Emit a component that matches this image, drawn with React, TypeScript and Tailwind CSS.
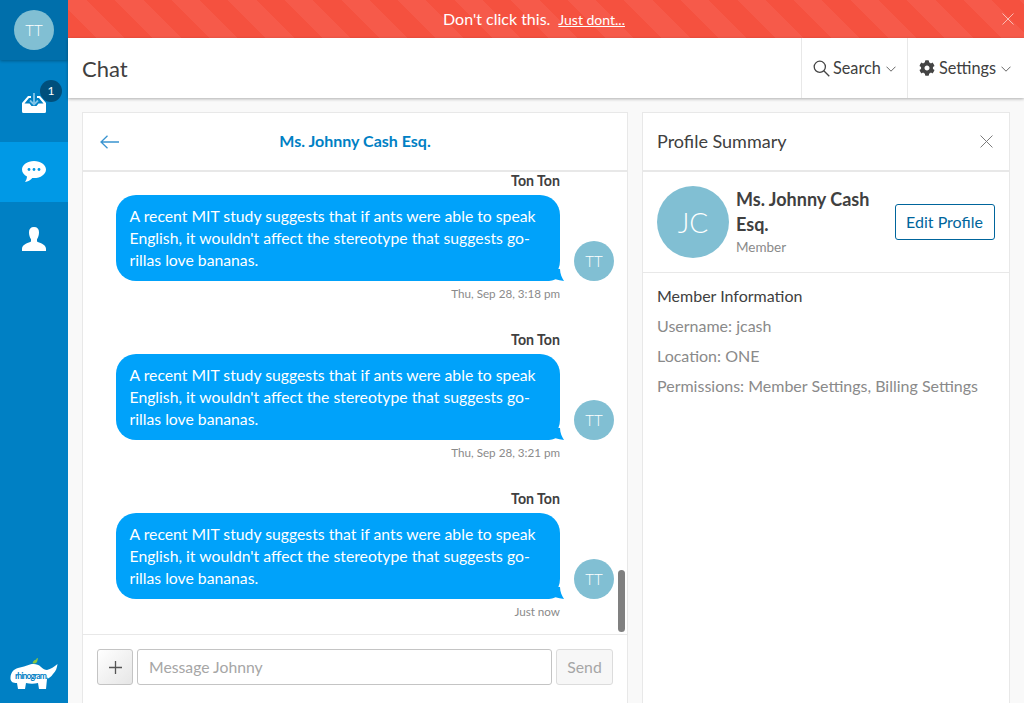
import { FaCog } from "react-icons/fa";

const lato = "font-['Lato',sans-serif]";

function Chevron() {
  return (
    <svg width="10" height="6" viewBox="0 0 10 6" fill="none" stroke="#555" strokeWidth="0.9" className="mt-0.5 ml-[5px]">
      <path d="M0.5 0.7L5 5.2L9.5 0.7" />
    </svg>
  );
}

function CloseIcon({ color, size }: any) {
  return (
    <svg width={size} height={size} viewBox="0 0 12 12" fill="none" stroke={color} strokeWidth="0.9">
      <path d="M0.5 0.5L11.5 11.5M11.5 0.5L0.5 11.5" />
    </svg>
  );
}

function InboxIcon() {
  return (
    <svg width="24" height="20" viewBox="0 0 24 20" className="block">
      <path d="M0 10L6 3H9V5H7L2.500 10.500H7.500L9.500 13H14.500L16.500 10.500H21.500L17 5H15V3H18L24 10V18.500A1.500 1.500 0 0 1 22.500 20H1.500A1.500 1.500 0 0 1 0 18.500z" fill="#fff" />
      <path d="M12 0V11M8 7.500L12 11.500L16 7.500" fill="none" stroke="#7fc4e8" strokeWidth="1.800" />
    </svg>
  );
}

function ChatIcon() {
  return (
    <svg width="24" height="22" viewBox="0 0 24 22" className="block">
      <path d="M12 0C5.400 0 0 3.700 0 8.500c0 3 2 5.500 5 7-.1 2-.9 4-2 5.500 2.800-.3 5.500-2 7.300-4 .6.100 1.100.100 1.700.100 6.600 0 12-3.800 12-8.600S18.600 0 12 0z" fill="#fff" />
      <circle cx="7" cy="8.500" r="1.400" fill="#0099e6" />
      <circle cx="12" cy="8.500" r="1.400" fill="#0099e6" />
      <circle cx="17" cy="8.500" r="1.400" fill="#0099e6" />
    </svg>
  );
}

function PersonIcon() {
  return (
    <svg width="24" height="24" viewBox="0 0 24 24" className="block">
      <path d="M12 0c3.300 0 5 2 5 5.200 0 2.600-.7 5.300-2 7v2.300c1.600 1.200 9 2.600 9 7.300V24H0v-2.200c0-4.700 7.400-6.100 9-7.300v-2.300C7.700 10.500 7 7.800 7 5.200 7 2 8.700 0 12 0z" fill="#fff" />
    </svg>
  );
}

function RhinoLogo() {
  return (
    <svg width="48" height="32" viewBox="0 0 48 32" className="block">
      <path d="M22.500 6.500C23 3.500 25 2.500 26 2.700L27 1L28 1.500L27 5C26 6.500 24 6.800 22.500 6.500z" fill="#8cc63f" />
      <path d="M8 32L7 26C3 26 0 25 0.500 20C1 15 4 12 8 11C12 10 16 9 20 7.500C24 6.500 28 7 31 10C33 12 35 13 37 13C41 12 44 10 47.500 7C47 11 46 14 43 17C41 20 39 21 37 22L36 32H29L28 26C24 27 20 27 16 26L15 32z" fill="#fff" />
      <text x="5" y="22" fontSize="8.500" fontWeight="700" fontFamily="Lato, sans-serif" fill="#0080c4" textLength="33">rhinogram.</text>
    </svg>
  );
}

function Message({ time }: any) {
  return (
    <div className="flex flex-col items-end pr-[67px]">
      <div className="text-[14.2px] leading-[22px] font-bold text-[#404040] mb-[3px]">Ton Ton</div>
      <div className="relative flex w-full justify-end">
        <div className="relative w-[444px] bg-[#00a2fa] text-white rounded-[20px] pl-[13.5px] pr-[14px] py-[10px] text-[15.75px] leading-[22px]">
          A recent MIT study suggests that if ants were able to speak English, it wouldn't affect the stereotype that suggests go-rillas love bananas.
          <svg width="24" height="12" viewBox="0 0 24 12" className="absolute right-[-4px] bottom-0">
            <path d="M0 0H20C20 5 22 9 24 12C21 11.500 18 11 15.500 10.300C13 11.500 11 12 9 12H0z" fill="#00a2fa" />
          </svg>
        </div>
        <div className="absolute right-[-54px] bottom-0 w-10 h-10 rounded-full bg-[#81bfd3] text-white font-light text-[15px] flex items-center justify-center">TT</div>
      </div>
      <div className="text-[11.65px] leading-[16px] mt-[5px] text-[#8a8a8a]">{time}</div>
    </div>
  );
}

export default function App() {
  return (
    <div className={`${lato} flex h-screen overflow-hidden bg-[#f9f9f9] text-[#404040]`}>
      <div className="w-[68px] shrink-0 bg-[#0080c4] flex flex-col">
        <div className="h-[60px] bg-[#006fab] shadow-[0_1px_3px_rgba(0,0,0,0.3)] flex items-center justify-center">
          <div className="w-10 h-10 rounded-full bg-[#81bfd3] text-white font-light text-[15px] flex items-center justify-center">TT</div>
        </div>
        <div className="relative h-[82px] flex items-center justify-center pt-[3px]">
          <InboxIcon />
          <div className="absolute left-[40px] top-[20px] w-[22px] h-[22px] rounded-full bg-[#004f7c] text-white text-[12px] flex items-center justify-center">1</div>
        </div>
        <div className="h-[60px] bg-[#0099e6] flex items-center justify-center">
          <ChatIcon />
        </div>
        <div className="h-[74px] flex items-center justify-center">
          <PersonIcon />
        </div>
        <div className="mt-auto flex justify-start pl-[10px] pb-[14px]">
          <RhinoLogo />
        </div>
      </div>

      <div className="flex-1 min-w-0 flex flex-col">
        <div className="relative h-[38px] shrink-0 flex items-center justify-center gap-2 pr-[24px] text-white text-[16px] bg-[repeating-linear-gradient(45deg,#f5513f_0,#f5513f_20px,#f65a4a_20px,#f65a4a_40px)]">
          <span>Don't click this.</span>
          <span className="underline text-[14px]">Just dont...</span>
          <span className="absolute right-[10px] top-[13px]">
            <CloseIcon color="#fbc7c0" size={12} />
          </span>
        </div>

        <div className="relative z-10 h-[60px] shrink-0 bg-white shadow-[0_1px_3px_rgba(0,0,0,0.3)] flex items-center">
          <div className="flex-1 pl-[14px] text-[22px]">Chat</div>
          <div className="h-full flex items-center pl-[11px] pr-[11px] border-l border-[#e8e8e8] text-[16.3px]">
            <svg width="17" height="17" viewBox="0 0 17 17" fill="none" stroke="#444" strokeWidth="1.300" className="mr-[3px]">
              <circle cx="6.800" cy="6.800" r="5.600" />
              <path d="M10.800 10.800L16.300 16.300" />
            </svg>
            <span>Search</span>
            <Chevron />
          </div>
          <div className="h-full flex items-center pl-[11px] pr-[13px] border-l border-[#e8e8e8] text-[16.3px]">
            <FaCog size={16} color="#444" className="mr-[4px]" />
            <span>Settings</span>
            <Chevron />
          </div>
        </div>

        <div className="flex-1 min-h-0 flex gap-[14px] pl-[14px] pr-[14px] pt-[14px]">
          <div className="relative w-[546px] shrink-0 bg-white border border-b-0 border-[#e8e8e8] flex flex-col">
            <div className="relative h-[59px] shrink-0 border-b-2 border-[#e8e8e8] flex items-center justify-center">
              <svg width="20" height="14" viewBox="0 0 20 14" fill="none" stroke="#3a94d0" strokeWidth="1.300" className="absolute left-[17px] top-[22px]">
                <path d="M19 7H1M7.500 0.700L1 7l6.500 6.300" />
              </svg>
              <span className="text-[16px] leading-[20px] mb-[2px] font-bold text-[#0080c4]">Ms. Johnny Cash Esq.</span>
            </div>

            <div className="flex-1 min-h-0 overflow-hidden flex flex-col justify-end gap-[27px] pl-[33px] pb-[14px]">
              <Message time="Thu, Sep 28, 3:18 pm" />
              <Message time="Thu, Sep 28, 3:21 pm" />
              <Message time="Just now" />
            </div>

            <div className="absolute right-[2px] top-[457px] w-[7px] h-[62px] rounded bg-[#808080]" />

            <div className="h-[69px] shrink-0 border-t border-[#e8e8e8] flex gap-1 px-[14px] pt-[14px]">
              <div className="w-[36px] h-[36px] rounded-[3px] border border-[#c4c4c4] bg-gradient-to-br from-white to-[#e6e6e6] flex items-center justify-center">
                <svg width="13" height="13" viewBox="0 0 13 13" stroke="#555" strokeWidth="1.300">
                  <path d="M6.500 0v13M0 6.500h13" />
                </svg>
              </div>
              <div className="flex-1 h-[36px] rounded-[3px] border border-[#c4c4c4] px-[11px] flex items-center text-[15.75px] text-[#a6a6a6]">Message Johnny</div>
              <div className="w-[57px] h-[36px] rounded-[3px] border border-[#dcdcdc] bg-[#f7f7f7] flex items-center justify-center text-[15.75px] text-[#a6a6a6]">Send</div>
            </div>
          </div>

          <div className="flex-1 min-w-0 bg-white border border-b-0 border-[#e8e8e8] flex flex-col">
            <div className="h-[59px] shrink-0 border-b-2 border-[#e8e8e8] flex items-center justify-between pl-[14px] pr-[16px]">
              <span className="text-[18px]">Profile Summary</span>
              <CloseIcon color="#777" size={13} />
            </div>
            <div className="h-[101px] shrink-0 border-b border-[#e8e8e8] flex items-center pl-[14px] pr-[14px]">
              <div className="w-[72px] h-[72px] shrink-0 rounded-full bg-[#81bfd3] text-white font-light text-[28px] flex items-center justify-center">JC</div>
              <div className="ml-[7px] w-[150px] shrink-0">
                <div className="text-[18px] leading-[25px] font-bold">Ms. Johnny Cash Esq.</div>
                <div className="text-[13.5px] leading-[20px] text-[#8a8a8a]">Member</div>
              </div>
              <div className="ml-auto h-[36px] w-[100px] shrink-0 rounded-[3px] border border-[#00659c] text-[#00659c] text-[16px] flex items-center justify-center pr-[1px]">Edit Profile</div>
            </div>
            <div className="px-[14px] pt-[13px] text-[16px] leading-[20px] text-[#8a8a8a] flex flex-col gap-[10px]">
              <div className="text-[#404040]">Member Information</div>
              <div>Username: jcash</div>
              <div>Location: ONE</div>
              <div>Permissions: Member Settings, Billing Settings</div>
            </div>
          </div>
        </div>
      </div>
    </div>
  );
}
